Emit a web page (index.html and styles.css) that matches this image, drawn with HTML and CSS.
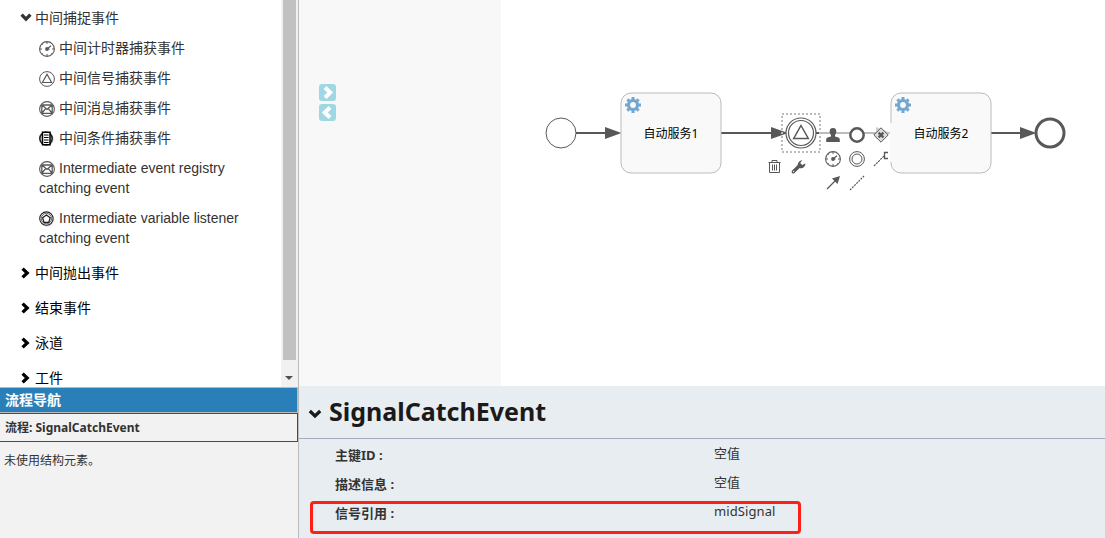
FILE: index.html
```html
<!DOCTYPE html>
<html lang="zh">
<head>
<meta charset="utf-8">
<title>SignalCatchEvent</title>
<link rel="stylesheet" href="styles.css">
</head>
<body>
<svg width="0" height="0" class="defs">
  <defs>
    <symbol id="chev" viewBox="0 0 12 12"><path d="M2.6 1.6 L7.2 6 L2.6 10.4" fill="none" stroke="currentColor" stroke-width="3.3"/></symbol>
    <symbol id="timer" viewBox="0 0 16 16"><g fill="none" stroke="#585858"><circle cx="8" cy="8" r="7.4" stroke-width="1.1"/><path d="M8 1v2M8 13v2M1 8h2M13 8h2M3.2 3.2l.6 .6M3.2 12.8l.6-.6M12.8 12.8l-.6-.6" stroke-width="1"/><path d="M8 8L12 4.8M8 8h2.500" stroke-width="1.2"/></g><circle cx="8" cy="8" r="1.9" fill="#585858"/></symbol>
    <symbol id="signal" viewBox="0 0 16 16"><g fill="none" stroke="#585858"><circle cx="8" cy="8" r="7.4"/><path d="M8 3.2L12.6 11.5H3.4Z" stroke-width="1.2"/></g></symbol>
    <symbol id="message" viewBox="0 0 16 16"><g fill="none" stroke="#585858"><circle cx="8" cy="8" r="7.4" stroke-width="1.1"/><path d="M2.800 4h10.400v8.300h-10.400ZM3 4l5 4.5L13 4M3 12l3.7-4.4M13 12L9.3 7.6" stroke-width="1.3"/></g></symbol>
    <symbol id="gear" viewBox="-8 -8 16 16"><circle r="4.500" fill="none" stroke="#72a7d0" stroke-width="3.200"/><path d="M0-8V-5M0 8V5M-8 0h3M8 0H5M-5.6-5.6l1.7 1.7M5.6 5.6L3.9 3.9M5.6-5.6L3.9-3.9M-5.6 5.6l1.7-1.7" stroke="#72a7d0" stroke-width="3" /></symbol>
  </defs>
</svg>
<div class="app">
  <aside class="side">
    <div class="palette">
      <div class="tree">
        <div class="group open"><svg class="chev down"><use href="#chev"/></svg>中间捕捉事件</div>
        <div class="items">
          <div class="item"><svg class="ico"><use href="#timer"/></svg>中间计时器捕获事件</div>
          <div class="item"><svg class="ico"><use href="#signal"/></svg>中间信号捕获事件</div>
          <div class="item"><svg class="ico"><use href="#message"/></svg>中间消息捕获事件</div>
          <div class="item"><svg class="ico" viewBox="0 0 16 16"><circle cx="7.8" cy="8.2" r="6.8" fill="#ccc"/><circle cx="7" cy="7.5" r="6.2" fill="#ddd" stroke="#222" stroke-width="1.6"/><path d="M3.500 1.2h7.500v12.6h-7.500Z" fill="#fff" stroke="#000" stroke-width="1.5"/><path d="M5 4h4.6M5 6.500h4.6M5 9h4.6M5 11.500h4.6" stroke="#000" stroke-width="1.1"/></svg>中间条件捕获事件</div>
          <div class="item"><svg class="ico"><use href="#message"/></svg>Intermediate event registry catching event</div>
          <div class="item"><svg class="ico" viewBox="0 0 16 16"><circle cx="8.200" cy="8.700" r="7" fill="#ddd"/><g fill="#fff" stroke="#222"><circle cx="7.4" cy="7.6" r="6.7" stroke-width="1.1"/><circle cx="7.4" cy="7.6" r="5.2" stroke-width=".7"/><path d="M7.4 4L11.2 6.8L9.8 11.4H5L3.6 6.8Z" stroke-width="1.3"/></g></svg>Intermediate variable listener catching event</div>
        </div>
        <div class="group"><svg class="chev"><use href="#chev"/></svg>中间抛出事件</div>
        <div class="group"><svg class="chev"><use href="#chev"/></svg>结束事件</div>
        <div class="group"><svg class="chev"><use href="#chev"/></svg>泳道</div>
        <div class="group"><svg class="chev"><use href="#chev"/></svg>工件</div>
      </div>
      <div class="scroll"><div class="thumb"></div><div class="arrow"></div></div>
    </div>
    <div class="nav">
      <div class="nav-head">流程导航</div>
      <div class="nav-process">流程: <span class="pname">SignalCatchEvent</span></div>
      <div class="nav-empty">未使用结构元素。</div>
    </div>
  </aside>
  <main class="main">
    <div class="canvas">
      <div class="gutter">
        <div class="toggle"><svg width="17" height="17"><path d="M6 3.5L11.2 8.5L6 13.5" fill="none" stroke="#fff" stroke-width="4"/></svg></div>
        <div class="toggle"><svg width="17" height="17"><path d="M11 3.5L5.8 8.5L11 13.5" fill="none" stroke="#fff" stroke-width="4"/></svg></div>
      </div>
      <svg class="diagram" width="604" height="386" viewBox="501 0 604 386">
        <g stroke="#585858" stroke-width="2" fill="none">
          <path d="M576 133H608M721 133H773M991 133H1023"/>
          <path d="M816 133H822"/>
        </g>
        <path d="M821 133H891" stroke="#bcbcbc" stroke-width="2"/>
        <path d="M876 127L891 133L876 139Z" fill="#cfcfcf"/>
        <g fill="#585858"><path d="M605 127L621.500 133L605 139ZM771 127L788 133L771 139ZM1020 127L1036.500 133L1020 139Z"/></g>
        <g fill="#f9f9f9" stroke="#bbb"><rect x="621" y="93" width="100" height="80" rx="10"/><rect x="891" y="93" width="100" height="80" rx="10"/></g>
        <path d="M891 123V162" stroke="#f9f9f9" stroke-width="2"/>
        <use href="#gear" x="625" y="97" width="16" height="16"/><use href="#gear" x="895" y="97" width="16" height="16"/>
        <text class="task" x="671" y="138">自动服务1</text><text class="task" x="941" y="138">自动服务2</text>
        <circle cx="561" cy="133" r="15" fill="#fff" stroke="#585858"/>
        <circle cx="1050" cy="133" r="14" fill="#fff" stroke="#585858" stroke-width="3"/>
        <rect x="782" y="114" width="38" height="38" fill="none" stroke="#bbb" stroke-width="2" stroke-dasharray="2 2"/>
        <g fill="#fff" stroke="#585858" stroke-width="1.200"><circle cx="801" cy="133" r="15"/><circle cx="801" cy="133" r="12.500"/><path d="M801 125.500L808.300 138.500H793.700Z" stroke-width="1.500"/></g>
        <path d="M833 128c2.500 0 3.500 1.700 3.300 3.700c-.1 1.500-.8 2.500-1.300 3.300v1.500c2.500.5 4.800 1 4.800 3.200v2.300h-13.600v-2.300c0-2.200 2.300-2.700 4.800-3.200V135c-.5-.8-1.200-1.800-1.300-3.300c-.2-2 .8-3.700 3.300-3.700Z" fill="#585858"/>
        <circle cx="857" cy="135" r="6.700" fill="#fff" stroke="#585858" stroke-width="2.500"/>
        <path d="M881 127.800L888.200 135L881 142.200L873.800 135Z" fill="#ddd" stroke="#585858"/><path d="M878.600 132.600l4.800 4.800M883.400 132.600l-4.800 4.800" stroke="#585858" stroke-width="2.200"/>
        <use href="#timer" x="825" y="151" width="16" height="16"/>
        <g fill="none" stroke="#585858"><circle cx="857" cy="159" r="7.400"/><circle cx="857" cy="159" r="5"/><path d="M888 152.500h-3.500v6h3.500" stroke-width="1.300"/><path d="M884 156L874 166" stroke-dasharray="2.200 .8" stroke-width="1.100"/><path d="M850 190L864 176" stroke-dasharray="2 1" stroke-width="1.200"/><path d="M827 189L836 180" stroke-width="1.300"/></g>
        <path d="M840 176L837.500 184L832 178.500Z" fill="#585858"/>
        <g fill="none" stroke="#585858"><path d="M768.500 162.500h12M772 162v-1.500h5v1.500M769.500 163v9.500h10V163M772.500 164.500v6M774.500 164.500v6M776.500 164.500v6"/></g>
        <path d="M793.300 171.700L799.500 165.700" stroke="#585858" stroke-width="3.400" stroke-linecap="round"/><path d="M798 167.200c-1-3.200.6-6.400 4.200-6.900l-2 2.800 2 2 3.200-1.700c0 3.400-3 5.500-6 4.600Z" fill="#585858"/><circle cx="793.600" cy="171.400" r=".6" fill="#fff"/>
      </svg>
    </div>
    <section class="props">
      <div class="title"><svg class="tchev" viewBox="0 0 14 10"><path d="M1.800 2L7 7L12.200 2" fill="none" stroke="#1a1a1a" stroke-width="3.200"/></svg><h1>SignalCatchEvent</h1></div>
      <div class="rows">
        <div class="row"><b>主键ID :</b><span>空值</span></div>
        <div class="row"><b>描述信息 :</b><span>空值</span></div>
        <div class="row"><b>信号引用 :</b><span class="value">midSignal</span></div>
        <div class="mark"></div>
      </div>
    </section>
  </main>
</div>
</body>
</html>
```
FILE: styles.css
```css
* { box-sizing: border-box; }
body { margin: 0; width: 1105px; height: 538px; overflow: hidden; background: #fff; }
.defs { position: absolute; }
.app { display: flex; width: 1105px; height: 538px; }
.side { width: 299px; border-right: 1px solid #bbb; background: #f2f2f2; display: flex; flex-direction: column; }
.palette { height: 387px; display: flex; background: #fff; overflow: hidden; }
.tree { width: 281px; padding-top: 8px; font: 14px/20px "Liberation Sans", "Noto Sans CJK SC", sans-serif; color: #000; }
.group { height: 20px; padding-left: 20px; margin-bottom: 15px; display: flex; align-items: center; }
.group.open { color: #333; margin-bottom: 10px; }
.chev { width: 12px; height: 12px; margin-right: 3px; }
.down { transform: rotate(90deg); }
.items { padding: 0 30px 0 39px; margin-bottom: 15px; display: flex; flex-direction: column; gap: 10px; color: #333; }
.item { min-height: 20px; }
.items .item:nth-child(-n+4) { height: 20px; }
.ico { width: 16px; height: 16px; margin-right: 4px; vertical-align: -4px; }
.scroll { width: 17px; background: #f1f1f1; padding: 0 2px; }
.thumb { width: 13px; height: 360px; background: #c1c1c1; }
.arrow { width: 0; height: 0; margin: 16px 0 0 2px; border: 4px solid transparent; border-top-color: #505050; border-bottom: 0; }
.nav { font-family: "Noto Sans", "Noto Sans CJK SC", sans-serif; color: #333; font-size: 12px; }
.nav-head { height: 26px; width: 298px; border: 1px solid #bbb; border-left: 0; background: #2980b9; color: #fff; font-weight: bold; font-size: 14px; line-height: 24px; padding-left: 5px; }
.nav-process { height: 29px; border: 1px solid #008000; border-left: 0; font-weight: bold; line-height: 27px; padding-left: 5px; white-space: nowrap; }
.nav-empty { padding: 10px 4px; line-height: 18px; }
.main { width: 806px; display: flex; flex-direction: column; }
.canvas { height: 386px; display: flex; }
.gutter { width: 202px; background: #f8f8f8; padding: 84px 0 0 20px; display: flex; flex-direction: column; gap: 3px; }
.toggle { width: 17px; height: 17px; background: #9fd8e4; border-radius: 3px; }
.toggle svg { display: block; }
.task { font: 12px "Noto Sans", "Noto Sans CJK SC", sans-serif; text-anchor: middle; fill: #000; }
.props { flex: 1; background: #e8edf1; font-family: "Noto Sans", "Noto Sans CJK SC", sans-serif; color: #333; }
.title { height: 53px; border-bottom: 1px solid #a4adc0; display: flex; align-items: center; padding-left: 9px; }
.tchev { width: 14px; height: 10px; margin: 4px 7px 0 0; }
h1 { margin: 0; padding-bottom: 2px; font-size: 25px; line-height: 50px; color: #1a1a1a; }
.rows { position: relative; padding: 2px 0 0 36px; font-size: 13px; }
.row { display: grid; grid-template-columns: 379px 1fr; height: 29px; line-height: 26px; }
.row b { padding-top: 1px; font-weight: bold; }
.row span { line-height: 24px; letter-spacing: 0.1px; }
.mark { position: absolute; left: 11px; top: 62px; width: 491px; height: 33px; border: 3px solid #fe2015; border-radius: 4px; }
```
